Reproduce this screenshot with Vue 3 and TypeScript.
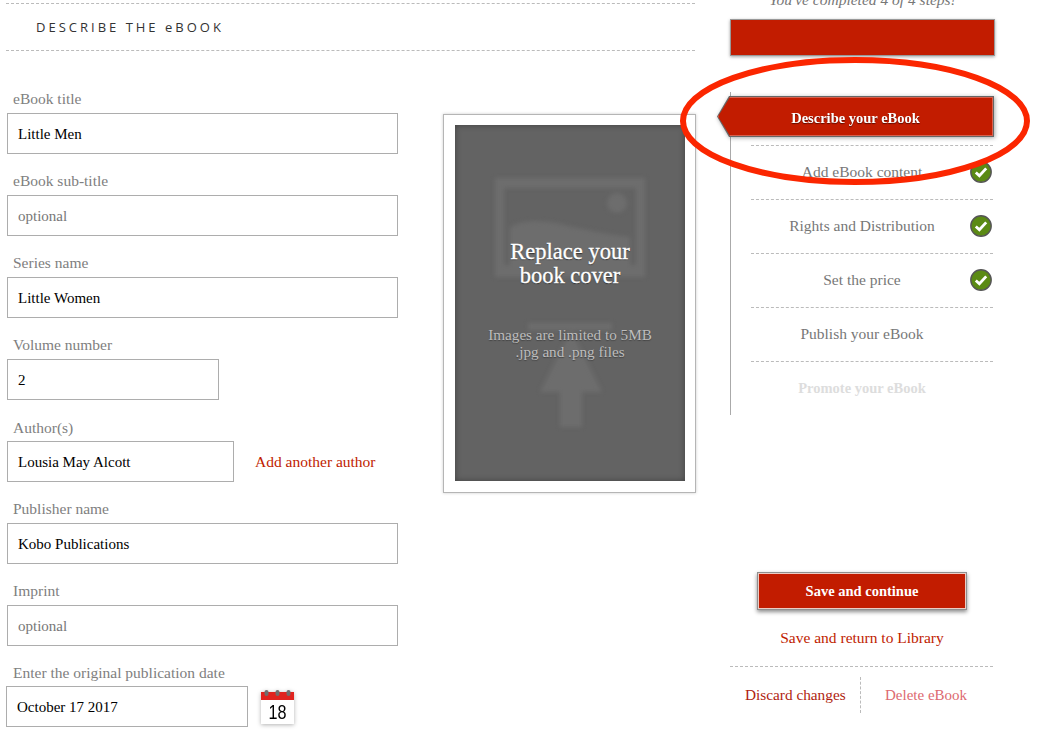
<script setup lang="ts">
const steps = [
  { name: 'Add eBook content', done: true, muted: false },
  { name: 'Rights and Distribution', done: true, muted: false },
  { name: 'Set the price', done: true, muted: false },
  { name: 'Publish your eBook', done: false, muted: false },
  { name: 'Promote your eBook', done: false, muted: true }
]

const topFields = [
  { label: 'eBook title', value: 'Little Men', placeholder: '', size: 'wide' },
  { label: 'eBook sub-title', value: '', placeholder: 'optional', size: 'wide' },
  { label: 'Series name', value: 'Little Women', placeholder: '', size: 'wide' },
  { label: 'Volume number', value: '2', placeholder: '', size: 'small' }
]

const bottomFields = [
  { label: 'Publisher name', value: 'Kobo Publications', placeholder: '' },
  { label: 'Imprint', value: '', placeholder: 'optional' }
]
</script>

<template>
  <div class="page">
    <main class="content">
      <header class="heading">DESCRIBE THE eBOOK</header>
      <div class="columns">
        <form class="form">
          <div v-for="field in topFields" :key="field.label" class="field">
            <label>{{ field.label }}</label>
            <input :class="field.size" :value="field.value" :placeholder="field.placeholder" />
          </div>
          <div class="field">
            <label class="low">Author(s)</label>
            <div class="inline">
              <input class="author" value="Lousia May Alcott" />
              <a class="add-author">Add another author</a>
            </div>
          </div>
          <div v-for="field in bottomFields" :key="field.label" class="field">
            <label>{{ field.label }}</label>
            <input class="wide" :value="field.value" :placeholder="field.placeholder" />
          </div>
          <div class="field date-field">
            <label class="low">Enter the original publication date</label>
            <div class="inline">
              <input class="date" value="October 17 2017" />
              <svg class="calendar" width="33" height="34" viewBox="0 0 33 34">
                <rect x="0" y="2" width="33" height="32" fill="#fff" />
                <rect x="0" y="2" width="33" height="8" fill="#e0231f" />
                <g fill="#6e6e6e">
                  <rect x="3.5" y="0" width="4" height="6" rx="2" />
                  <rect x="14.5" y="0" width="4" height="6" rx="2" />
                  <rect x="25.5" y="0" width="4" height="6" rx="2" />
                </g>
                <text
                  x="16.5"
                  y="29"
                  text-anchor="middle"
                  textLength="18"
                  lengthAdjust="spacingAndGlyphs"
                  class="calendar-day"
                >18</text>
              </svg>
            </div>
          </div>
        </form>

        <section class="cover">
          <div class="cover-inner">
            <svg class="cover-art" width="230" height="356" viewBox="0 0 230 356">
              <g fill="#6d6d6d">
                <path fill-rule="evenodd" d="M40 53h150v99H40zM49 63v77h132V63z" />
                <circle cx="162" cy="78" r="10" />
                <path d="M55 103c10-8 30-8 50-4 25 6 50 11 70 13v28H55z" />
                <path d="M73 198h84v7H73zM116 205l31 62h-20v35h-22v-35H85z" />
              </g>
            </svg>
            <h2>Replace your<br />book cover</h2>
            <p>Images are limited to 5MB<br />.jpg and .png files</p>
          </div>
        </section>
      </div>
    </main>

    <aside class="sidebar">
      <div class="status"><em>You've completed 4 of 4 steps!</em></div>
      <div class="progress"></div>

      <nav class="steps">
        <div class="tab">
          <div class="tab-outline">
            <div class="tab-fill">Describe your eBook</div>
          </div>
        </div>
        <div
          v-for="step in steps"
          :key="step.name"
          class="step"
          :class="{ muted: step.muted }"
        >
          {{ step.name }}
          <svg v-if="step.done" class="check" width="22" height="22" viewBox="0 0 22 22">
            <circle cx="11" cy="11" r="10.2" fill="#5b8a14" stroke="#555" stroke-width="1.4" />
            <path d="M5.8 11.4l3.6 3.4 6.8-7.4" fill="none" stroke="#fff" stroke-width="2.8" />
          </svg>
        </div>
      </nav>

      <button class="save" type="button">Save and continue</button>
      <a class="return-link">Save and return to Library</a>
      <div class="actions">
        <a class="discard">Discard changes</a>
        <span class="divider"></span>
        <a class="delete">Delete eBook</a>
      </div>
    </aside>

    <svg class="oval" width="370" height="140" viewBox="0 0 370 140">
      <ellipse cx="185" cy="70" rx="172" ry="61" fill="none" stroke="#fb2600" stroke-width="6" />
    </svg>
  </div>
</template>

<style>
body {
  margin: 0;
  background: #fff;
}
</style>

<style scoped>
.page {
  position: relative;
  display: flex;
  width: 1038px;
  height: 740px;
  overflow: hidden;
  font-family: "Liberation Serif", serif;
  font-size: 15.5px;
  color: #777;
}

.content {
  flex: none;
  width: 689px;
  margin-left: 6px;
  padding-top: 3px;
}

.heading {
  height: 46px;
  padding-left: 30px;
  border-top: 1px dashed #bbb;
  border-bottom: 1px dashed #bbb;
  font-family: "Open Sans", sans-serif;
  font-size: 13px;
  line-height: 46px;
  letter-spacing: 3px;
  color: #333;
}

.columns {
  display: flex;
  padding-top: 39px;
}

.form {
  flex: none;
  width: 437px;
}

.field {
  margin-bottom: 18px;
  padding-left: 1px;
}

.field label {
  display: block;
  height: 18px;
  margin-bottom: 5px;
  padding-left: 6px;
  line-height: 18px;
  color: #808080;
}

.field label.low {
  margin-bottom: 4px;
  padding-top: 1px;
}

.field input {
  box-sizing: border-box;
  display: block;
  height: 41px;
  padding: 2px 10px 0;
  border: 1px solid #adadad;
  border-radius: 0;
  outline: none;
  background: #fff;
  font-family: "Liberation Serif", serif;
  font-size: 15px;
  color: #000;
}

.field input::placeholder {
  color: #777;
  opacity: 1;
}

.wide {
  width: 391px;
}

.small {
  width: 212px;
}

.inline {
  display: flex;
  align-items: center;
}

.field input.author {
  width: 227px;
}

.add-author {
  margin-left: 21px;
  color: #c01c00;
}

.date-field {
  margin-top: -1px;
  padding-left: 0;
}

.date-field label {
  padding-left: 7px;
}

.field input.date {
  width: 242px;
}

.calendar {
  margin-left: 13px;
  filter: drop-shadow(0 1px 2px rgba(0, 0, 0, 0.3));
}

.calendar-day {
  font-family: "Liberation Sans", sans-serif;
  font-size: 20px;
  fill: #000;
}

.cover {
  flex: none;
  box-sizing: border-box;
  width: 253px;
  height: 379px;
  margin-top: 24px;
  padding: 10px 10px 11px 11px;
  border: 1px solid #b5b5b5;
  box-shadow: 0 0 3px rgba(0, 0, 0, 0.2);
}

.cover-inner {
  position: relative;
  height: 356px;
  padding-top: 115px;
  box-sizing: border-box;
  background: #636363;
  box-shadow: inset 0 0 6px rgba(0, 0, 0, 0.35);
  text-align: center;
}

.cover-art {
  position: absolute;
  top: 0;
  left: 0;
  filter: blur(2px);
}

.cover-inner h2,
.cover-inner p {
  position: relative;
  margin: 0;
}

.cover-inner h2 {
  font-size: 22.5px;
  font-weight: normal;
  line-height: 24px;
  color: #fff;
  -webkit-text-stroke: 0.3px #fff;
  text-shadow: 0 1px 1px #333;
}

.cover-inner p {
  margin-top: 38px;
  font-size: 15.2px;
  line-height: 17px;
  color: #bdbdbd;
  text-shadow: 0 1px 1px #444;
}

.sidebar {
  display: flex;
  flex: none;
  flex-direction: column;
  align-items: flex-start;
  width: 265px;
  margin-left: 35px;
}

.status {
  display: flex;
  align-items: flex-end;
  justify-content: center;
  width: 100%;
  height: 8px;
  overflow: hidden;
  line-height: 16px;
  color: #777;
}

.status em {
  flex: none;
}

.progress {
  box-sizing: border-box;
  width: 265px;
  height: 37px;
  margin-top: 11px;
  border: 1px solid #999;
  background: #c21c00;
  box-shadow: 0 1px 3px rgba(0, 0, 0, 0.35);
}

.steps {
  box-sizing: border-box;
  width: 100%;
  height: 323px;
  margin-top: 36px;
  padding-top: 4px;
  border-left: 1px solid #aaa;
}

.tab {
  width: 277px;
  height: 41px;
  margin: 0 0 8px -14px;
  filter: drop-shadow(1px 1px 2px rgba(0, 0, 0, 0.35));
}

.tab-outline {
  box-sizing: border-box;
  height: 41px;
  padding: 1px;
  background: #666;
  clip-path: polygon(12px 0, 100% 0, 100% 100%, 12px 100%, 0 50%);
}

.tab-fill {
  height: 39px;
  background: #c21c00;
  box-shadow: inset 0 0 0 1px #d9604d;
  clip-path: polygon(12px 0, 100% 0, 100% 100%, 12px 100%, 0 50%);
  font-size: 14.5px;
  font-weight: bold;
  line-height: 43px;
  text-align: center;
  color: #fff;
  text-shadow: 0 1px 1px #5a0d00;
}

.step {
  position: relative;
  box-sizing: border-box;
  width: 242px;
  height: 54px;
  margin-left: 20px;
  padding-right: 20px;
  border-top: 1px dashed #bbb;
  line-height: 52px;
  text-align: center;
  color: #777;
}

.step.muted {
  color: #ddd;
  font-size: 14.5px;
  font-weight: bold;
}

.check {
  position: absolute;
  top: 15px;
  right: 1px;
}

.save {
  box-sizing: border-box;
  width: 210px;
  height: 38px;
  margin: 157px 0 0 27px;
  padding: 0;
  border: 1px solid #8f8f8f;
  outline: 1px solid #eccbc4;
  outline-offset: -2px;
  background: #c21c00;
  box-shadow: 0 2px 4px rgba(0, 0, 0, 0.45);
  font-family: "Liberation Serif", serif;
  font-size: 14.5px;
  font-weight: bold;
  color: #fff;
}

.return-link {
  width: 264px;
  margin-top: 19px;
  line-height: 18px;
  text-align: center;
  color: #c01c00;
}

.actions {
  display: flex;
  align-items: center;
  box-sizing: border-box;
  width: 263px;
  height: 47px;
  margin-top: 19px;
  padding: 10px 0 0 15px;
  border-top: 1px dashed #bbb;
  white-space: nowrap;
}

.discard {
  flex: none;
  width: 100px;
  font-size: 15.3px;
  color: #b01e10;
}

.divider {
  flex: none;
  height: 36px;
  margin: 0 24px 0 15px;
  border-left: 1px dashed #bbb;
}

.delete {
  font-size: 15px;
  color: #dd6a70;
}

.oval {
  position: absolute;
  top: 51px;
  left: 670px;
}
</style>
